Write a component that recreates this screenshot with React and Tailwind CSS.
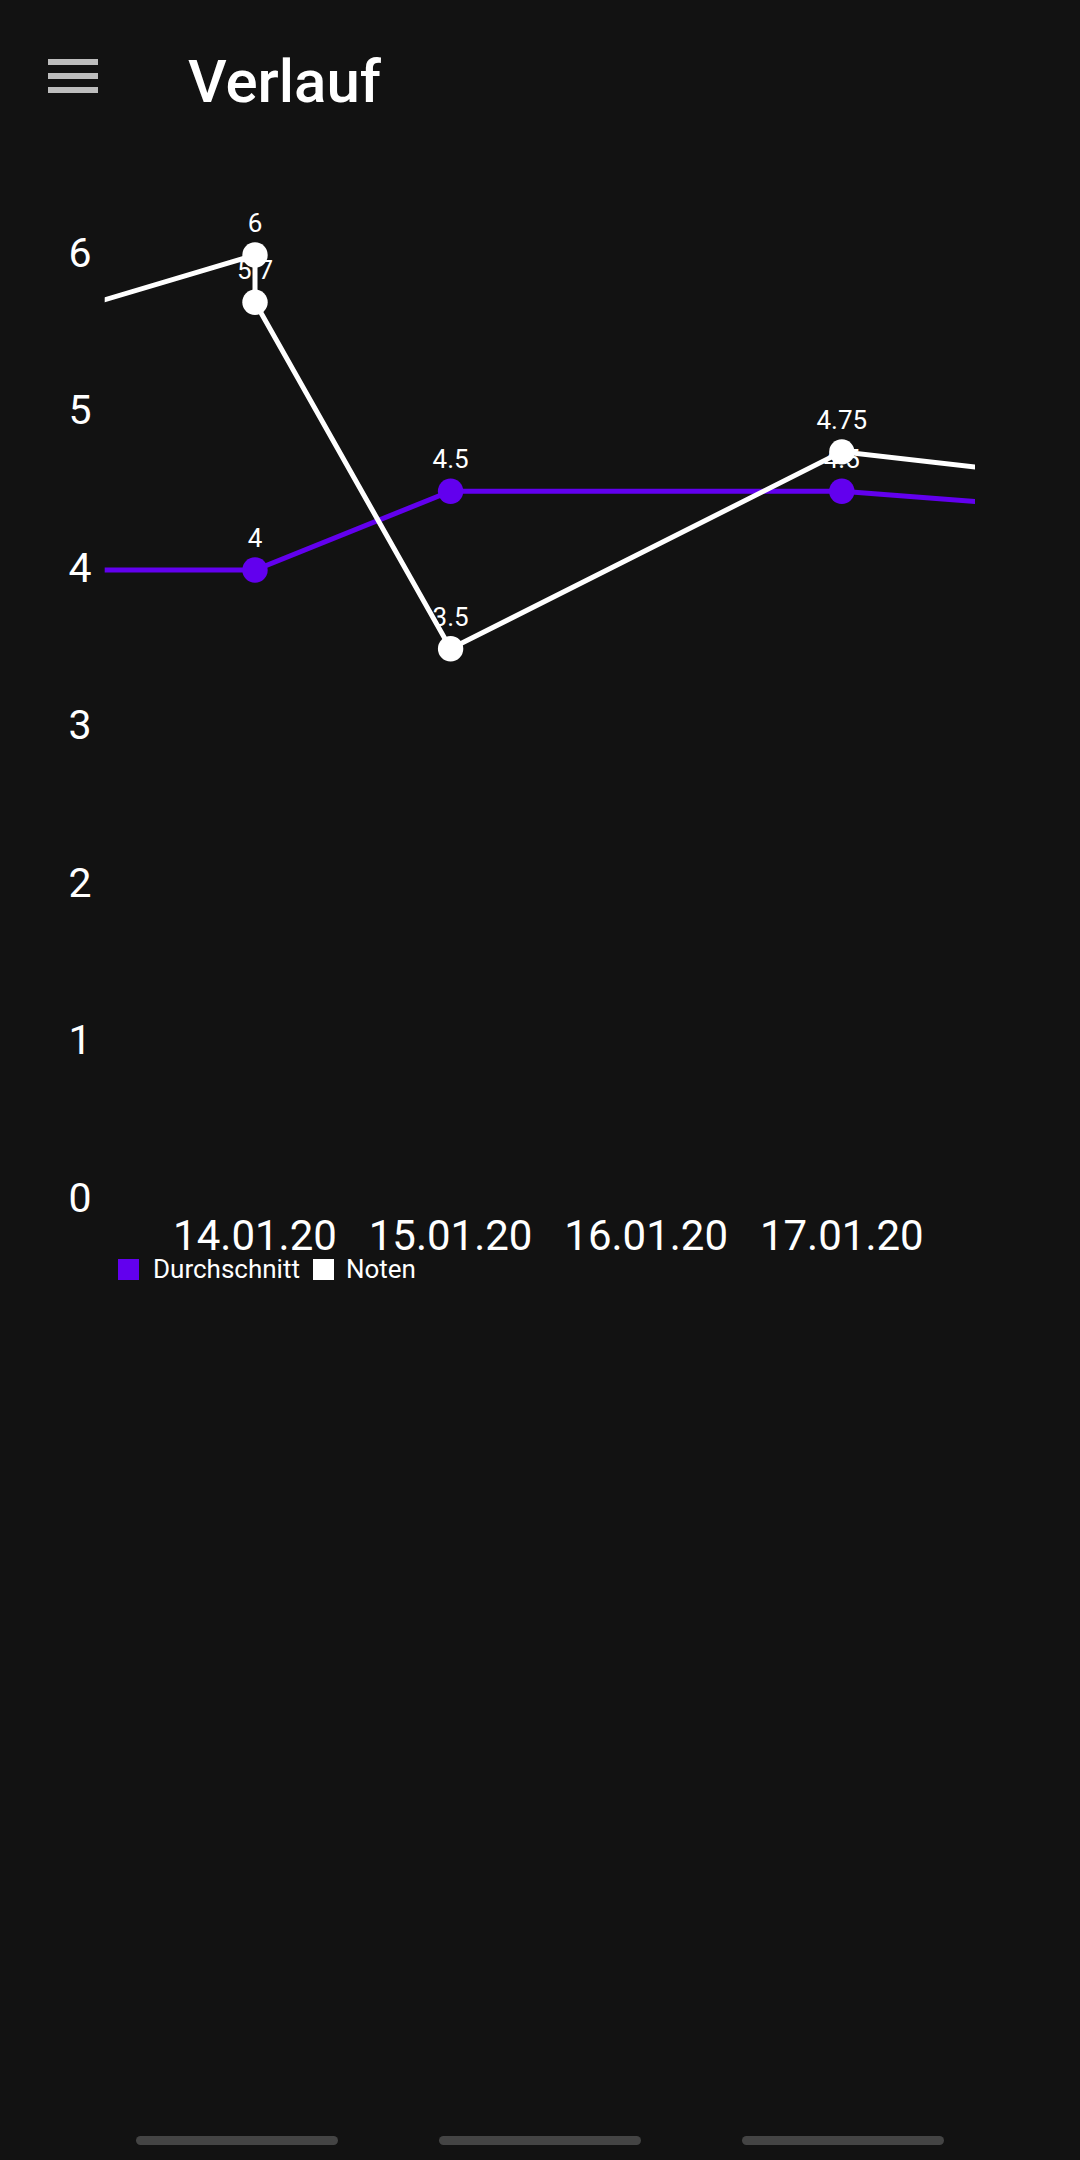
import React from 'react';

// chart geometry, page coordinates
const X0 = 255;
const DX = 195.6;
const xi = (i) => X0 + DX * i;
const yv = (v) => 1200 - 157.5 * v;

// index -1 and 4 lie outside the visible window (chart is scrolled)
const DURCHSCHNITT = [
  { i: -1, v: 4 },
  { i: 0, v: 4 },
  { i: 1, v: 4.5 },
  { i: 3, v: 4.5 },
  { i: 4, v: 4.404 }
];

const NOTEN = [
  { i: -1, v: 5.63 },
  { i: 0, v: 6 },
  { i: 0, v: 5.7 },
  { i: 1, v: 3.5 },
  { i: 3, v: 4.75 },
  { i: 4, v: 4.609 }
];

const DATES = ['14.01.20', '15.01.20', '16.01.20', '17.01.20'];
const PURPLE = '#6200ee';

const visible = (pts) => pts.filter(p => p.i >= 0 && p.i <= 3);
const toPath = (pts) => pts.map((p, k) => `${k ? 'L' : 'M'}${xi(p.i)} ${yv(p.v)}`).join(' ');

const Chart = () => (
  <svg width="1080" height="1105" viewBox="0 152 1080 1105" className="block" fontFamily="Roboto, sans-serif">
    <defs>
      <clipPath id="plot">
        <rect x="104.7" y="152" width="870.3" height="1105" />
      </clipPath>
    </defs>

    {[0, 1, 2, 3, 4, 5, 6].map(v => (
      <text key={v} x="80" y={yv(v) + 11.5} fontSize="41" fill="#ffffff" textAnchor="middle">{v}</text>
    ))}

    <g clipPath="url(#plot)" fill="none" strokeWidth="5">
      <path d={toPath(DURCHSCHNITT)} stroke={PURPLE} />
      <path d={toPath(NOTEN)} stroke="#ffffff" />
    </g>

    {visible(DURCHSCHNITT).map((p, k) => (
      <circle key={'a' + k} cx={xi(p.i)} cy={yv(p.v)} r="12.7" fill={PURPLE} />
    ))}
    {visible(NOTEN).map((p, k) => (
      <circle key={'n' + k} cx={xi(p.i)} cy={yv(p.v)} r="12.7" fill="#ffffff" />
    ))}

    {[...visible(DURCHSCHNITT), ...visible(NOTEN)].map((p, k) => (
      <text key={'l' + k} x={xi(p.i)} y={yv(p.v) - 23} fontSize="26" fill="#ffffff" textAnchor="middle">{p.v}</text>
    ))}

    {DATES.map((d, i) => (
      <text key={d} x={xi(i)} y="1250" fontSize="42" fill="#ffffff" textAnchor="middle">{d}</text>
    ))}
  </svg>
);

const App = () => {
  return (
    <div className="h-[2160px] w-[1080px] bg-[#121212] text-white flex flex-col font-[Roboto,sans-serif]">
      <div className="flex items-start h-[152px] pt-[52px]">
        <div className="ml-[48px] mt-[7px] flex flex-col gap-[8.5px]">
          <div className="w-[50px] h-[5.5px] bg-[#bdbdbd]" />
          <div className="w-[50px] h-[5.5px] bg-[#bdbdbd]" />
          <div className="w-[50px] h-[5.5px] bg-[#bdbdbd]" />
        </div>
        <h1 className="ml-[90px] text-[60px] leading-[60px] font-medium">Verlauf</h1>
      </div>

      <Chart />

      <div className="flex items-center h-[25px] pl-[118px] text-[26px] leading-[25px]">
        <span className="w-[21px] h-[21px] bg-[#6200ee]" />
        <span className="ml-[14px]">Durchschnitt</span>
        <span className="ml-[13px] w-[21px] h-[21px] bg-white" />
        <span className="ml-[12px]">Noten</span>
      </div>

      <div className="mt-auto pb-[15px] flex justify-center gap-[101px]">
        <div className="w-[202px] h-[9px] rounded-full bg-[#444444]" />
        <div className="w-[202px] h-[9px] rounded-full bg-[#444444]" />
        <div className="w-[202px] h-[9px] rounded-full bg-[#444444]" />
      </div>
    </div>
  );
};

export default App;
